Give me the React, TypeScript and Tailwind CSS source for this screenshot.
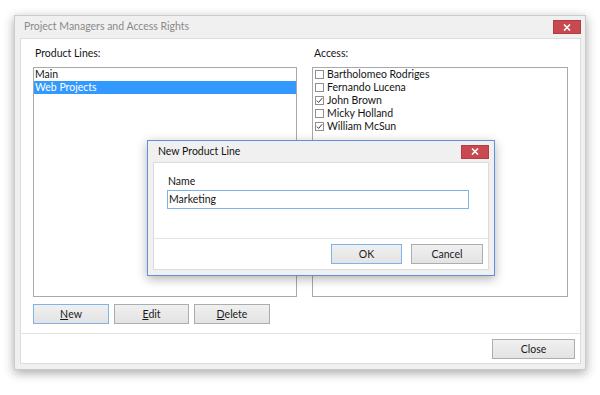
import type { ReactNode } from "react";

const USERS = [
  { name: "Bartholomeo Rodriges", checked: false },
  { name: "Fernando Lucena", checked: false },
  { name: "John Brown", checked: true },
  { name: "Micky Holland", checked: false },
  { name: "William McSun", checked: true },
];

function CloseBox() {
  return (
    <div className="w-[28px] h-[14px] bg-[#c84a50] border border-[#b23c41] flex items-center justify-center">
      <svg width="8" height="7" viewBox="0 0 8 7">
        <path d="M1 0.5l6 6M7 0.5l-6 6" stroke="#fff" strokeWidth="1.6" />
      </svg>
    </div>
  );
}

function Btn({ children, focused, w }: { children: ReactNode; focused?: boolean; w: string }) {
  return (
    <button
      className={`${w} h-[20px] border bg-gradient-to-b from-[#f0f0f0] to-[#e3e3e3] text-[#1a1a1a] flex items-center justify-center leading-none ${
        focused ? "border-[#7eb4ea]" : "border-[#adadad]"
      }`}
    >
      {children}
    </button>
  );
}

function Check({ on }: { on: boolean }) {
  return (
    <span className="w-[9px] h-[9px] border border-[#8f8f8f] bg-white flex items-center justify-center shrink-0">
      {on && (
        <svg width="7" height="7" viewBox="0 0 7 7">
          <path d="M0.8 3.6l1.8 1.8 3.6-4.2" stroke="#333" strokeWidth="1" fill="none" />
        </svg>
      )}
    </span>
  );
}

export default function App() {
  return (
    <div className="relative w-[600px] h-[395px] bg-white overflow-hidden pt-[15px] pl-[14px] font-['Lato',sans-serif] text-[10.5px] text-[#141414]">
      {/* Main window */}
      <div className="w-[572px] h-[355px] bg-[#f0f0f0] border border-[#cbcbcb] shadow-[0_3px_10px_rgba(0,0,0,0.35)] flex flex-col pl-[5px] pr-[4px] pb-[5px]">
        <div className="h-[22px] flex items-center justify-between">
          <span className="pl-[4px] text-[#8a8a8a]">Project Managers and Access Rights</span>
          <CloseBox />
        </div>

        <div className="flex-1 bg-white border border-[#dcdcdc] flex flex-col">
          <div className="flex-1 flex pl-[12px] pr-[14px] pt-[7px] gap-[15px]">
            {/* Product lines */}
            <div className="flex flex-col">
              <div className="h-[15px] leading-[15px] pl-[2px] mb-[6px]">Product Lines:</div>
              <div className="w-[264px] h-[230px] border border-[#a9a9a9] flex flex-col">
                <div className="h-[13px] leading-[13px] pl-[1px]">Main</div>
                <div className="h-[13px] leading-[13px] pl-[1px] bg-[#3399ff] text-white">Web Projects</div>
              </div>
              <div className="flex gap-[5px] mt-[7px]">
                <Btn w="w-[76px]" focused>
                  <span className="underline">N</span>ew
                </Btn>
                <Btn w="w-[75px]">
                  <span className="underline">E</span>dit
                </Btn>
                <Btn w="w-[76px]">
                  <span className="underline">D</span>elete
                </Btn>
              </div>
            </div>

            {/* Access */}
            <div className="flex flex-col">
              <div className="h-[15px] leading-[15px] pl-[2px] mb-[6px]">Access:</div>
              <div className="w-[256px] h-[230px] border border-[#a9a9a9] flex flex-col pl-[2px]">
                {USERS.map((u) => (
                  <div key={u.name} className="h-[13px] flex items-center gap-[3px]">
                    <Check on={u.checked} />
                    <span className="leading-[13px]">{u.name}</span>
                  </div>
                ))}
              </div>
            </div>
          </div>

          <div className="h-[30px] border-t border-[#e3e3e3] flex justify-end pt-[5px] pr-[5px]">
            <Btn w="w-[83px]">Close</Btn>
          </div>
        </div>
      </div>

      {/* New Product Line dialog */}
      <div className="absolute left-[147px] top-[140px] w-[348px] h-[136px] bg-[#f0f0f0] border border-[#5b92d9] shadow-[0_3px_10px_rgba(0,0,0,0.3)] flex flex-col px-[5px] pb-[5px]">
        <div className="h-[21px] flex items-center justify-between">
          <span className="pl-[5px]">New Product Line</span>
          <CloseBox />
        </div>
        <div className="flex-1 bg-white border border-[#dcdcdc] flex flex-col">
          <div className="flex-1 pt-[11px] pl-[13px]">
            <div className="h-[15px] leading-[15px] pl-[1px] mb-[1px]">Name</div>
            <div className="w-[302px] h-[19px] border border-[#7eb4ea] flex items-center pl-[1px]">Marketing</div>
          </div>
          <div className="h-[31px] border-t border-[#e3e3e3] flex justify-end gap-[9px] pt-[5px] pr-[5px]">
            <Btn w="w-[71px]" focused>
              OK
            </Btn>
            <Btn w="w-[72px]">Cancel</Btn>
          </div>
        </div>
      </div>
    </div>
  );
}
